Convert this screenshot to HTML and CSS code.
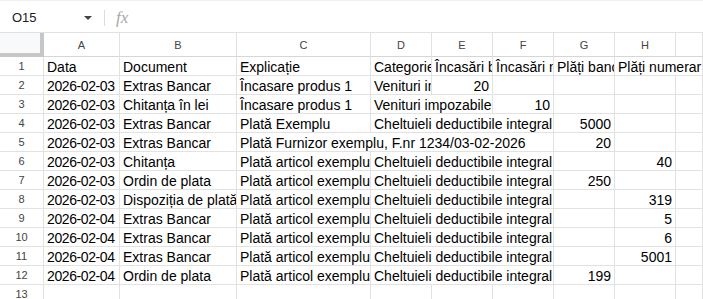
FILE: index.html
```html
<!DOCTYPE html>
<html lang="ro">
<head>
    <meta charset="UTF-8">
    <meta name="viewport" content="width=device-width, initial-scale=1.0">
    <title>Registru de casă și bancă</title>
    <link rel="stylesheet" href="styles.css">
</head>
<body>
    <div class="toolbar">
        <div class="name-box">O15</div>
        <span class="arrow"></span>
        <span class="sep"></span>
        <span class="fx">fx</span>
    </div>

    <div class="sheet">
        <div class="corner"></div>
        <div class="col-head">A</div>
        <div class="col-head">B</div>
        <div class="col-head">C</div>
        <div class="col-head">D</div>
        <div class="col-head">E</div>
        <div class="col-head">F</div>
        <div class="col-head">G</div>
        <div class="col-head">H</div>
        <div class="col-head"></div>

        <!-- 1 -->
        <div class="row-head">1</div>
        <div class="cell">Data</div>
        <div class="cell">Document</div>
        <div class="cell">Explicație</div>
        <div class="cell">Categorie</div>
        <div class="cell">Încasări bancă</div>
        <div class="cell">Încasări numerar</div>
        <div class="cell">Plăți bancă</div>
        <div class="cell span2">Plăți numerar</div>

        <!-- 2 -->
        <div class="row-head">2</div>
        <div class="cell date">2026-02-03</div>
        <div class="cell">Extras Bancar</div>
        <div class="cell">Încasare produs 1</div>
        <div class="cell">Venituri impozabile</div>
        <div class="cell num">20</div>
        <div class="cell"></div>
        <div class="cell"></div>
        <div class="cell"></div>
        <div class="cell"></div>

        <!-- 3 -->
        <div class="row-head">3</div>
        <div class="cell date">2026-02-03</div>
        <div class="cell">Chitanța în lei</div>
        <div class="cell">Încasare produs 1</div>
        <div class="cell span2">Venituri impozabile</div>
        <div class="cell num">10</div>
        <div class="cell"></div>
        <div class="cell"></div>
        <div class="cell"></div>

        <!-- 4 -->
        <div class="row-head">4</div>
        <div class="cell date">2026-02-03</div>
        <div class="cell">Extras Bancar</div>
        <div class="cell">Plată Exemplu</div>
        <div class="cell span3">Cheltuieli deductibile integral</div>
        <div class="cell num">5000</div>
        <div class="cell"></div>
        <div class="cell"></div>

        <!-- 5 -->
        <div class="row-head">5</div>
        <div class="cell date">2026-02-03</div>
        <div class="cell">Extras Bancar</div>
        <div class="cell span4">Plată Furnizor exemplu, F.nr 1234/03-02-2026</div>
        <div class="cell num">20</div>
        <div class="cell"></div>
        <div class="cell"></div>

        <!-- 6 -->
        <div class="row-head">6</div>
        <div class="cell date">2026-02-03</div>
        <div class="cell">Chitanța</div>
        <div class="cell">Plată articol exemplu</div>
        <div class="cell span3">Cheltuieli deductibile integral</div>
        <div class="cell"></div>
        <div class="cell num">40</div>
        <div class="cell"></div>

        <!-- 7 -->
        <div class="row-head">7</div>
        <div class="cell date">2026-02-03</div>
        <div class="cell">Ordin de plata</div>
        <div class="cell">Plată articol exemplu</div>
        <div class="cell span3">Cheltuieli deductibile integral</div>
        <div class="cell num">250</div>
        <div class="cell"></div>
        <div class="cell"></div>

        <!-- 8 -->
        <div class="row-head">8</div>
        <div class="cell date">2026-02-03</div>
        <div class="cell">Dispoziția de plată</div>
        <div class="cell">Plată articol exemplu</div>
        <div class="cell span3">Cheltuieli deductibile integral</div>
        <div class="cell"></div>
        <div class="cell num">319</div>
        <div class="cell"></div>

        <!-- 9 -->
        <div class="row-head">9</div>
        <div class="cell date">2026-02-04</div>
        <div class="cell">Extras Bancar</div>
        <div class="cell">Plată articol exemplu</div>
        <div class="cell span3">Cheltuieli deductibile integral</div>
        <div class="cell"></div>
        <div class="cell num">5</div>
        <div class="cell"></div>

        <!-- 10 -->
        <div class="row-head">10</div>
        <div class="cell date">2026-02-04</div>
        <div class="cell">Extras Bancar</div>
        <div class="cell">Plată articol exemplu</div>
        <div class="cell span3">Cheltuieli deductibile integral</div>
        <div class="cell"></div>
        <div class="cell num">6</div>
        <div class="cell"></div>

        <!-- 11 -->
        <div class="row-head">11</div>
        <div class="cell date">2026-02-04</div>
        <div class="cell">Extras Bancar</div>
        <div class="cell">Plată articol exemplu</div>
        <div class="cell span3">Cheltuieli deductibile integral</div>
        <div class="cell"></div>
        <div class="cell num">5001</div>
        <div class="cell"></div>

        <!-- 12 -->
        <div class="row-head">12</div>
        <div class="cell date">2026-02-04</div>
        <div class="cell">Ordin de plata</div>
        <div class="cell">Plată articol exemplu</div>
        <div class="cell span3">Cheltuieli deductibile integral</div>
        <div class="cell num">199</div>
        <div class="cell"></div>
        <div class="cell"></div>

        <!-- 13 -->
        <div class="row-head">13</div>
        <div class="cell"></div>
        <div class="cell"></div>
        <div class="cell"></div>
        <div class="cell"></div>
        <div class="cell"></div>
        <div class="cell"></div>
        <div class="cell"></div>
        <div class="cell"></div>
        <div class="cell"></div>
    </div>
</body>
</html>
```

FILE: styles.css
```css
body {
    margin: 0;
    font-family: "Liberation Sans", Arial, sans-serif;
    background: #fff;
    color: #000;
    overflow: hidden;
}
.toolbar {
    display: flex;
    align-items: center;
    height: 33px;
    box-sizing: border-box;
    padding-top: 2px;
    border-top: 1px solid #f1f1f1;
    border-bottom: 1px solid #e1e1e1;
}
.name-box {
    width: 72px;
    padding-left: 12px;
    font-size: 13px;
    color: #202124;
}
.arrow {
    width: 0;
    height: 0;
    border-left: 4px solid transparent;
    border-right: 4px solid transparent;
    border-top: 4px solid #444;
}
.sep {
    width: 1px;
    height: 16px;
    margin-left: 12px;
    background: #dadce0;
}
.fx {
    margin-left: 11px;
    font-family: "Liberation Serif", serif;
    font-style: italic;
    font-size: 17px;
    color: #a8a8a8;
}
.sheet {
    display: grid;
    grid-template-columns: 44px 76px 117px 134px 61px 61px 61px 61px 61px 1fr;
    grid-template-rows: 24px repeat(13, 19px);
}
.sheet > div {
    box-sizing: border-box;
    border-right: 1px solid #e2e2e2;
    border-bottom: 1px solid #e2e2e2;
}
.sheet > .corner {
    background: #f8f9fa;
    border-right: 4px solid #c7c7c7;
    border-bottom: 4px solid #c7c7c7;
}
.col-head,
.row-head {
    display: flex;
    align-items: center;
    justify-content: center;
    font-size: 11px;
    color: #444;
}
.sheet > .col-head {
    border-bottom-color: #d6d6d6;
}
.cell {
    font-family: "Liberation Sans", Arial, sans-serif;
    font-size: 14px;
    line-height: 16px;
    padding: 2px 3px 0;
    white-space: nowrap;
    overflow: hidden;
}
.date {
    letter-spacing: -0.4px;
}
.num {
    text-align: right;
}
.span2 {
    grid-column: span 2;
}
.span3 {
    grid-column: span 3;
}
.span4 {
    grid-column: span 4;
}
```
